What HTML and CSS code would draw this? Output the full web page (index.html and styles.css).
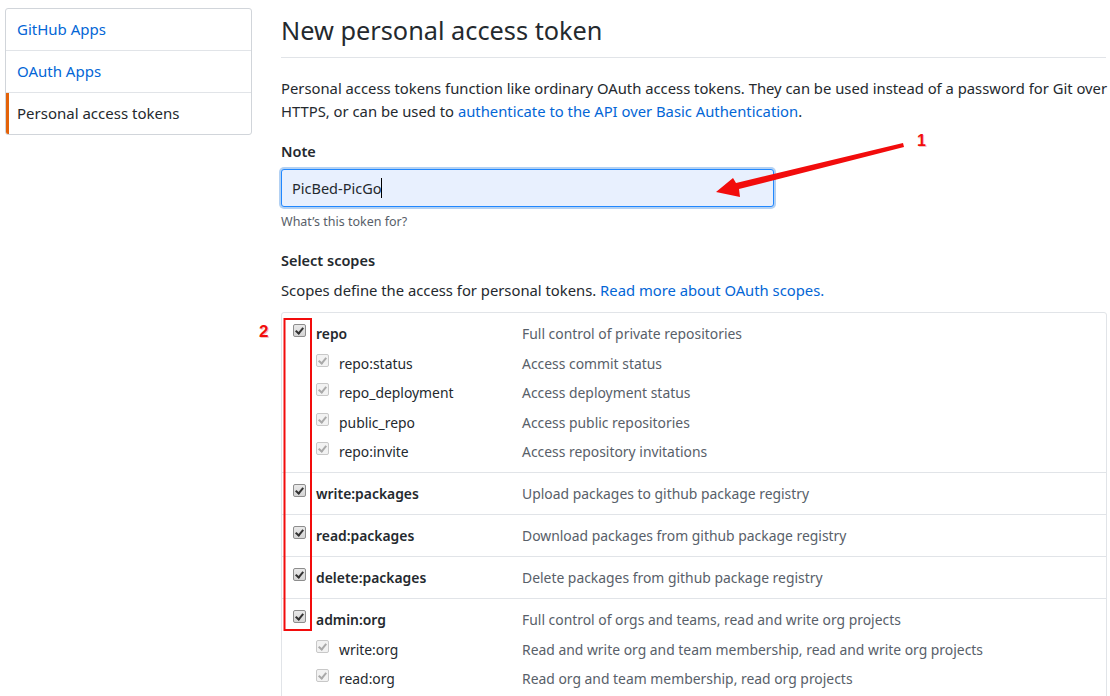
FILE: index.html
```html
<!DOCTYPE html>
<html>
<head>
<meta charset="utf-8">
<link rel="stylesheet" href="styles.css">
</head>
<body>
<div class="page">
  <nav class="menu">
    <a class="menu-item">GitHub Apps</a>
    <a class="menu-item">OAuth Apps</a>
    <a class="menu-item selected">Personal access tokens</a>
  </nav>
  <main class="main">
    <div class="subhead"><h1>New personal access token</h1></div>
    <p class="intro">Personal access tokens function like ordinary OAuth access tokens. They can be used instead of a password for Git over HTTPS, or can be used to <a class="link">authenticate to the API over Basic Authentication</a>.</p>
    <div class="label">Note</div>
    <div class="input"><span class="input-text">PicBed-PicGo</span><span class="caret"></span></div>
    <div class="note">What’s this token for?</div>
    <div class="label scopes-title">Select scopes</div>
    <div class="scopes-desc">Scopes define the access for personal tokens. <a class="link">Read more about OAuth scopes.</a></div>
    <div class="table">
      <div class="group">
        <div class="item parent"><span class="cb"></span><span class="name">repo</span><span class="desc">Full control of private repositories</span></div>
        <div class="item child"><span class="cb dis"></span><span class="name">repo:status</span><span class="desc">Access commit status</span></div>
        <div class="item child"><span class="cb dis"></span><span class="name">repo_deployment</span><span class="desc">Access deployment status</span></div>
        <div class="item child"><span class="cb dis"></span><span class="name">public_repo</span><span class="desc">Access public repositories</span></div>
        <div class="item child"><span class="cb dis"></span><span class="name">repo:invite</span><span class="desc">Access repository invitations</span></div>
      </div>
      <div class="group">
        <div class="item parent"><span class="cb"></span><span class="name">write:packages</span><span class="desc">Upload packages to github package registry</span></div>
      </div>
      <div class="group">
        <div class="item parent"><span class="cb"></span><span class="name">read:packages</span><span class="desc">Download packages from github package registry</span></div>
      </div>
      <div class="group">
        <div class="item parent"><span class="cb"></span><span class="name">delete:packages</span><span class="desc">Delete packages from github package registry</span></div>
      </div>
      <div class="group">
        <div class="item parent"><span class="cb"></span><span class="name">admin:org</span><span class="desc">Full control of orgs and teams, read and write org projects</span></div>
        <div class="item child"><span class="cb dis"></span><span class="name">write:org</span><span class="desc">Read and write org and team membership, read and write org projects</span></div>
        <div class="item child"><span class="cb dis"></span><span class="name">read:org</span><span class="desc">Read org and team membership, read org projects</span></div>
      </div>
    </div>
  </main>
</div>
<svg class="annot" width="1110" height="696" viewBox="0 0 1110 696">
  <polygon points="716,192 733,178 736,183 903,143 904,147 739,189 740,197" fill="#f20c0c"/>
  <rect x="284.5" y="319" width="26.5" height="311" fill="none" stroke="#f20c0c" stroke-width="2"/>
</svg>
<span class="mark mark1">1</span>
<span class="mark mark2">2</span>
</body>
</html>
```
FILE: styles.css
```css
html, body { margin: 0; padding: 0; background: #fff; }
body {
  font-family: "Noto Sans", "Open Sans", sans-serif;
  color: #24292e;
  font-size: 14.8px;
  overflow: hidden;
  width: 1110px;
  height: 696px;
  position: relative;
}
.page {
  display: flex;
  align-items: flex-start;
  padding: 8px 0 0 5px;
  gap: 29px;
}
.menu {
  width: 247px;
  box-sizing: border-box;
  border: 1px solid #d1d5da;
  border-radius: 3px;
  display: flex;
  flex-direction: column;
  flex: none;
}
.menu-item {
  display: block;
  height: 42px;
  line-height: 41px;
  padding-left: 11px;
  color: #0366d6;
  font-size: 15px;
  border-bottom: 1px solid #e1e4e8;
  box-sizing: border-box;
}
.menu-item.selected {
  color: #24292e;
  border-bottom: none;
  border-left: 3px solid #e36209;
  padding-left: 8px;
  height: 41px;
  border-radius: 0 0 0 2px;
}
.main {
  width: 825px;
  flex: none;
}
.subhead {
  padding-top: 2px;
  padding-bottom: 7px;
  border-bottom: 1px solid #e1e4e8;
  white-space: nowrap;
}
h1 {
  margin: 0;
  font-weight: 400;
  font-size: 25.3px;
  line-height: 40px;
}
.intro {
  margin: 19px 0 0;
  line-height: 23px;
  width: 830px;
}
.link { color: #0366d6; }
.label {
  font-weight: 600;
  line-height: 23px;
  margin-top: 17px;
  font-size: 14.5px;
}
.input {
  margin-top: 6px;
  width: 493px;
  height: 38px;
  box-sizing: border-box;
  border: 1px solid #2188ff;
  border-radius: 3px;
  background: #e8f0fe;
  box-shadow: 0 0 0 2px rgba(3, 102, 214, 0.3);
  display: flex;
  align-items: center;
  padding-left: 10px;
  font-size: 14.5px;
}
.caret {
  display: inline-block;
  width: 1px;
  height: 20px;
  background: #000;
}
.note {
  margin-top: 6px;
  font-size: 12.5px;
  line-height: 18px;
  color: #586069;
}
.scopes-title { margin-top: 18px; }
.scopes-desc {
  margin-top: 7px;
  line-height: 23px;
}
.table {
  margin-top: 10px;
  border: 1px solid #e1e4e8;
  border-radius: 3px;
  width: 826px;
  box-sizing: border-box;
  font-size: 13.9px;
}
.group {
  padding: 6px 0 5.5px;
  border-top: 1px solid #e1e4e8;
}
.group:first-child { border-top: none; }
.item {
  display: flex;
  align-items: center;
  height: 29.5px;
  padding-left: 11px;
}
.item.child { padding-left: 34px; }
.cb {
  flex: none;
  width: 11px;
  height: 11px;
  border: 1px solid #8d8d8d;
  border-radius: 2px;
  background: linear-gradient(#e9e9e9, #d5d5d5);
  position: relative;
  margin-right: 10px;
  margin-top: -6px;
}
.cb::after {
  content: "";
  position: absolute;
  left: 3px;
  top: 1px;
  width: 3px;
  height: 6px;
  border: solid #333;
  border-width: 0 2px 2px 0;
  transform: rotate(40deg);
}
.cb.dis {
  border-color: #c8c8c8;
  background: #f2f2f2;
}
.cb.dis::after { border-color: #a9a9a9; }
.name {
  flex: none;
  width: 183px;
  white-space: nowrap;
}
.parent .name { font-weight: 600; width: 206px; }
.desc {
  color: #586069;
  white-space: nowrap;
}
.annot {
  position: absolute;
  left: 0;
  top: 0;
  pointer-events: none;
}
.mark {
  position: absolute;
  color: #f20c0c;
  font-weight: 700;
  font-family: "Liberation Sans", sans-serif;
  text-shadow: 1px 1px 0 #f3c0c0, -0.5px 0 0 #fff;
}
.mark1 { left: 917px; top: 132px; font-size: 16px; }
.mark2 { left: 259px; top: 322px; font-size: 17px; }
```
